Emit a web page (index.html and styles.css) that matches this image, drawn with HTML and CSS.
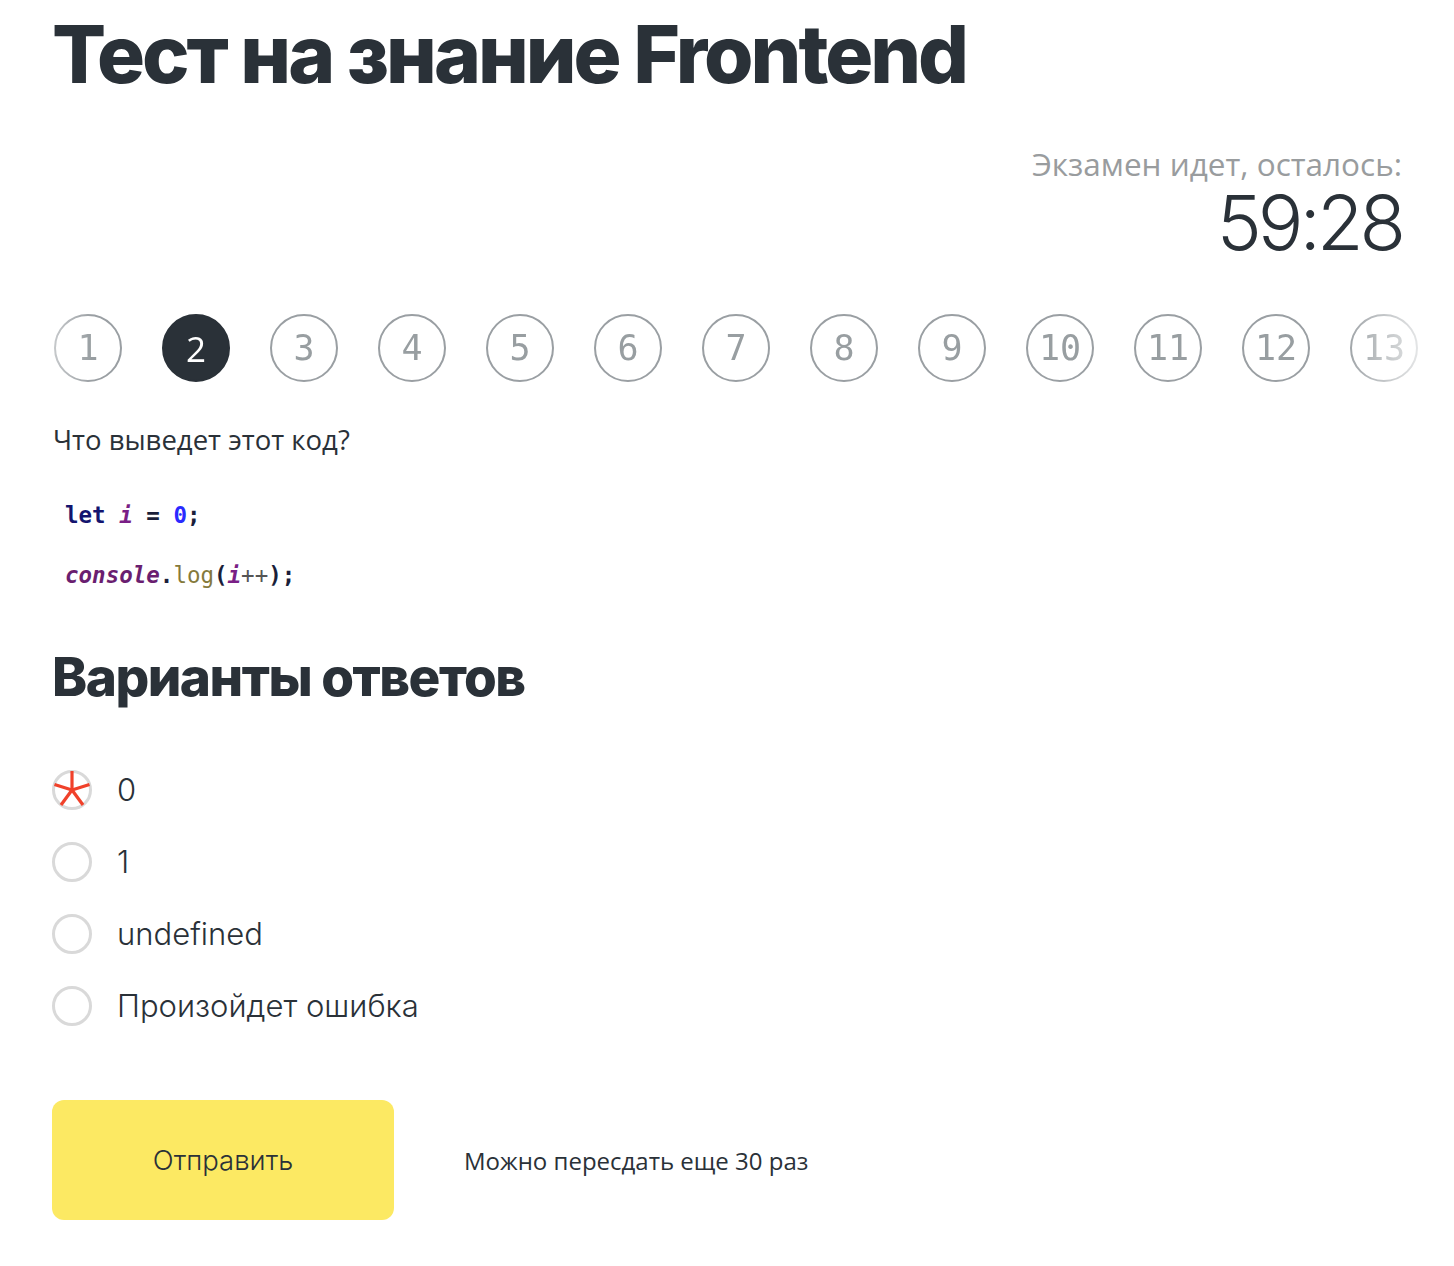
FILE: index.html
```html
<!DOCTYPE html>
<html lang="ru">
<head>
<meta charset="utf-8">
<title>Тест на знание Frontend</title>
<link rel="stylesheet" href="styles.css">
</head>
<body>
<main class="page">
  <h1 class="title">Тест на знание Frontend</h1>

  <div class="timer">
    <div class="timer-label">Экзамен идет, осталось:</div>
    <div class="timer-value">59:28</div>
  </div>

  <nav class="steps">
    <span class="step">1</span>
    <span class="step step-active">2</span>
    <span class="step">3</span>
    <span class="step">4</span>
    <span class="step">5</span>
    <span class="step">6</span>
    <span class="step">7</span>
    <span class="step">8</span>
    <span class="step">9</span>
    <span class="step">10</span>
    <span class="step">11</span>
    <span class="step">12</span>
    <span class="step">13</span>
  </nav>

  <p class="question">Что выведет этот код?</p>

  <div class="code">
    <div class="code-line"><span class="kw">let</span> <span class="var">i</span> = <span class="num">0</span>;</div>
    <div class="code-line"><span class="obj">console</span>.<span class="fn">log</span>(<span class="var">i</span><span class="op">++</span>);</div>
  </div>

  <h2 class="subtitle">Варианты ответов</h2>

  <div class="options">
    <label class="option">
      <span class="radio radio-marked">
        <svg class="star" viewBox="0 0 40 40" width="40" height="40" aria-hidden="true">
          <g stroke="#f0412a" stroke-width="3.2" stroke-linecap="butt" fill="none">
            <line x1="20" y1="20" x2="20" y2="1"/>
            <line x1="20" y1="20" x2="37.5" y2="14.5"/>
            <line x1="20" y1="20" x2="31" y2="35"/>
            <line x1="20" y1="20" x2="9" y2="35"/>
            <line x1="20" y1="20" x2="2.5" y2="14.5"/>
          </g>
        </svg>
      </span>
      <span class="option-text">0</span>
    </label>
    <label class="option">
      <span class="radio"></span>
      <span class="option-text">1</span>
    </label>
    <label class="option">
      <span class="radio"></span>
      <span class="option-text">undefined</span>
    </label>
    <label class="option">
      <span class="radio"></span>
      <span class="option-text">Произойдет ошибка</span>
    </label>
  </div>

  <div class="actions">
    <button class="submit" type="button">Отправить</button>
    <span class="retries">Можно пересдать еще 30 раз</span>
  </div>
</main>
</body>
</html>
```

FILE: styles.css
```css
html, body {
  margin: 0;
  padding: 0;
  background: #ffffff;
}

body {
  color: #2a3138;
  font-family: "Open Sans", "Liberation Sans", sans-serif;
}

.page {
  padding: 0 0 40px 52px;
  display: flex;
  flex-direction: column;
  overflow: hidden;
}

.title {
  margin: 14px 0 0 0;
  font-family: "Inter", "Liberation Sans", sans-serif;
  font-weight: 800;
  font-size: 80px;
  line-height: 80px;
  letter-spacing: -3px;
  color: #2a3138;
}

.timer {
  align-self: flex-end;
  margin: 52px 52px 0 0;
  display: flex;
  flex-direction: column;
  align-items: flex-end;
}

.timer-label {
  font-family: "Open Sans", sans-serif;
  font-size: 31.5px;
  line-height: 36px;
  color: #999c9e;
}

.timer-value {
  font-family: "Inter", sans-serif;
  font-weight: 300;
  font-size: 76px;
  line-height: 76px;
  letter-spacing: -4px;
  color: #2a3138;
  margin-top: 2px;
}

.steps {
  margin-top: 54px;
  display: flex;
  gap: 40px;
  width: 1368px;
  padding-left: 2px;
  -webkit-mask-image: linear-gradient(to right, rgba(0,0,0,0.55) 0, #000 40px, #000 1290px, rgba(0,0,0,0.25) 1368px);
  mask-image: linear-gradient(to right, rgba(0,0,0,0.55) 0, #000 40px, #000 1290px, rgba(0,0,0,0.25) 1368px);
}

.step {
  flex: 0 0 68px;
  width: 68px;
  height: 68px;
  box-sizing: border-box;
  border: 2px solid #9a9fa3;
  border-radius: 50%;
  display: flex;
  align-items: center;
  justify-content: center;
  font-family: "DejaVu Sans Mono", monospace;
  font-size: 35px;
  color: #989ea1;
}

.step-active {
  background: #2a3138;
  border-color: #2a3138;
  color: #ffffff;
  font-family: "Open Sans", sans-serif;
}

.question {
  margin: 40px 0 0 1px;
  font-size: 27.5px;
  line-height: 36px;
  color: #2a3138;
}

.code {
  margin: 42px 0 0 13px;
  font-family: "DejaVu Sans Mono", monospace;
  font-weight: bold;
  font-size: 22.5px;
  color: #1a1f3a;
  display: flex;
  flex-direction: column;
  gap: 30px;
}

.code-line {
  line-height: 30px;
}

.kw { color: #14146e; }
.var { color: #7a1f86; font-style: italic; }
.num { color: #2a2aff; }
.obj { color: #6a1e70; font-style: italic; }
.fn { color: #857a3c; font-weight: normal; }
.op { color: #555555; font-weight: normal; }

.subtitle {
  margin: 57px 0 0 0;
  font-family: "Inter", "Liberation Sans", sans-serif;
  font-weight: 800;
  font-size: 53px;
  line-height: 60px;
  letter-spacing: -1.5px;
  color: #2a3138;
}

.options {
  margin-top: 63px;
  display: flex;
  flex-direction: column;
  gap: 32px;
}

.option {
  display: flex;
  align-items: center;
  gap: 25px;
  height: 40px;
}

.radio {
  position: relative;
  flex: 0 0 40px;
  width: 40px;
  height: 40px;
  box-sizing: border-box;
  border: 3px solid #d9d9d9;
  border-radius: 50%;
}

.star {
  position: absolute;
  left: -3px;
  top: -3px;
}

.option-text {
  font-family: "Inter", sans-serif;
  font-weight: 300;
  font-size: 31px;
  line-height: 40px;
  color: #2a3138;
}

.actions {
  margin-top: 74px;
  display: flex;
  align-items: center;
  gap: 70px;
}

.submit {
  width: 342px;
  height: 120px;
  border: none;
  border-radius: 12px;
  background: #fce963;
  font-family: "Inter", sans-serif;
  font-weight: 300;
  font-size: 27.5px;
  color: #2a3138;
  cursor: pointer;
}

.retries {
  font-family: "Open Sans", sans-serif;
  font-size: 24px;
  color: #2a3138;
}
```
